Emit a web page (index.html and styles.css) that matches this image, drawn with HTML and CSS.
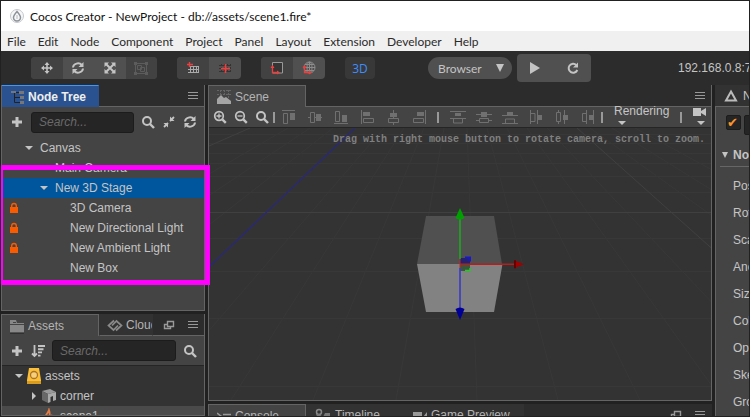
FILE: index.html
```html
<!DOCTYPE html>
<html lang="en">
<head>
<meta charset="utf-8">
<title>Cocos Creator</title>
<link rel="stylesheet" href="styles.css">
</head>
<body>
<svg class="defs" aria-hidden="true">
  <defs>
    <symbol id="search" viewBox="0 0 14 14"><circle cx="6" cy="6" r="4" fill="none" stroke="currentColor" stroke-width="2"/><path d="M9 9l4 4" stroke="currentColor" stroke-width="2.4"/></symbol>
    <symbol id="zoomin" viewBox="0 0 14 14"><circle cx="6" cy="6" r="4.3" fill="none" stroke="currentColor" stroke-width="1.7"/><path d="M9.3 9.3l3.5 3.5" stroke="currentColor" stroke-width="2.4"/><path d="M3.5 6h5M6 3.500v5" stroke="currentColor" stroke-width="1.300"/></symbol>
    <symbol id="zoomout" viewBox="0 0 14 14"><circle cx="6" cy="6" r="4.3" fill="none" stroke="currentColor" stroke-width="1.7"/><path d="M9.3 9.3l3.5 3.5" stroke="currentColor" stroke-width="2.4"/><path d="M3.5 6h5" stroke="currentColor" stroke-width="1.300"/></symbol>
    <symbol id="refresh" viewBox="0 0 14 14"><path d="M2 6.500A5 4.500 0 0 1 10.800 4M12 7.500A5 4.500 0 0 1 3.200 10" fill="none" stroke="currentColor" stroke-width="2"/><path d="M12.500 1v5h-5zM1.500 13V8h5z" fill="currentColor"/></symbol>
    <symbol id="plus" viewBox="0 0 14 14"><path d="M7 2v10M2 7h10" stroke="currentColor" stroke-width="3"/></symbol>
    <symbol id="menu" viewBox="0 0 14 14"><path d="M2 3.500h10M2 6.500h10M2 9.500h10" stroke="currentColor"/></symbol>
    <symbol id="popout" viewBox="0 0 14 14"><path d="M5.500 3.500h6v5h-6zM5 6.500H2.500v4h6V9" fill="none" stroke="currentColor" stroke-width="1.400"/></symbol>
    <symbol id="lock" viewBox="0 0 10 12"><path d="M1 5h8v6H1z" fill="currentColor"/><path d="M2.700 5.500V3.800a2.300 2.300 0 0 1 4.600 0v1.700" fill="none" stroke="currentColor" stroke-width="1.400"/></symbol>
    <symbol id="down" viewBox="0 0 8 8"><path d="M0 2h8L4 6z" fill="currentColor"/></symbol>
    <symbol id="camera" viewBox="0 0 14 10"><path d="M0 1h8v8H0zM13 1v8L8 6V4z" fill="currentColor"/></symbol>
    <symbol id="a1" viewBox="0 0 16 16"><path d="M1 1.500h13M2.500 4.500h4v10h-4z" fill="none" stroke="currentColor"/><path d="M9 4h5v7H9z" fill="currentColor"/></symbol>
    <symbol id="a2" viewBox="0 0 16 16"><path d="M1 8.500h2M7 8.500h8M3.500 3.500h4v10h-4z" fill="none" stroke="currentColor"/><path d="M9 5h5v7H9z" fill="currentColor"/></symbol>
    <symbol id="a3" viewBox="0 0 16 16"><path d="M1 14.500h14M2.500 2.500h4v10h-4z" fill="none" stroke="currentColor"/><path d="M9 6h5v7H9z" fill="currentColor"/></symbol>
    <symbol id="a4" viewBox="0 0 16 16"><path d="M2.500 1v14M4.500 9.500h10v4h-10z" fill="none" stroke="currentColor"/><path d="M4 3h7v4H4z" fill="currentColor"/></symbol>
    <symbol id="a5" viewBox="0 0 16 16"><path d="M8.500 1v8M8.500 13v3M3.500 9.500h10v4h-10z" fill="none" stroke="currentColor"/><path d="M5 4h7v4H5z" fill="currentColor"/></symbol>
    <symbol id="a6" viewBox="0 0 16 16"><path d="M14.500 1v14M2.500 9.500h10v4h-10z" fill="none" stroke="currentColor"/><path d="M6 3h7v4H6z" fill="currentColor"/></symbol>
    <symbol id="d1" viewBox="0 0 16 16"><path d="M0 2.500h16M0 9.500h16M3.500 10v4h9v-4" fill="none" stroke="currentColor"/><path d="M5 4h6v3H5z" fill="currentColor"/></symbol>
    <symbol id="d2" viewBox="0 0 16 16"><path d="M0 5.500h16M0 11.500h3M13 11.500h3M3.500 9.500h9v4h-9z" fill="none" stroke="currentColor"/><path d="M5 3h6v5H5z" fill="currentColor"/></symbol>
    <symbol id="d3" viewBox="0 0 16 16"><path d="M0 6.500h16M0 14.500h16M3.500 14v-4h9v4" fill="none" stroke="currentColor"/><path d="M5 3h6v3H5z" fill="currentColor"/></symbol>
    <symbol id="e1" viewBox="0 0 16 16"><path d="M2.500 1v14M9.500 1v14M3 4.500h4v8H3" fill="none" stroke="currentColor"/><path d="M10 6h4v5h-4z" fill="currentColor"/></symbol>
    <symbol id="e2" viewBox="0 0 16 16"><path d="M4.500 1v2M4.500 13v2M10.500 1v14M2.500 3.500h4v9h-4z" fill="none" stroke="currentColor"/><path d="M9 6h5v5H9z" fill="currentColor"/></symbol>
    <symbol id="e3" viewBox="0 0 16 16"><path d="M6.500 1v14M13.500 1v14M6 4.500H2.500v8H6" fill="none" stroke="currentColor"/><path d="M9 6h4v5H9z" fill="currentColor"/></symbol>
  </defs>
</svg>

<div class="window">
  <header class="titlebar">
    <svg class="i14" viewBox="0 0 14 14"><circle cx="7" cy="7" r="6.500" fill="#f7f7f7" stroke="#c5c8cc"/><path d="M7 2.500C4 6 3.500 7 3.500 8.500a3.500 3.500 0 0 0 7 0C10.500 7 10 6 7 2.500z" fill="none" stroke="#8d939b" stroke-width="1.500"/><path d="M7 6v4" stroke="#b5b9be"/></svg>
    <span>Cocos Creator - NewProject - db://assets/scene1.fire*</span>
  </header>
  <nav class="menubar">
    <a href="#">File</a><a href="#">Edit</a><a href="#">Node</a><a href="#">Component</a><a href="#">Project</a><a href="#">Panel</a><a href="#">Layout</a><a href="#">Extension</a><a href="#">Developer</a><a href="#">Help</a>
  </nav>

  <div class="toolbar">
    <div class="group transform">
      <button class="on" aria-label="Move"><svg class="i14" viewBox="0 0 14 14"><path d="M7 2v10M2 7h10" stroke="currentColor" stroke-width="1.600"/><path d="M7 1l2.500 3h-5zM7 13l2.500-3h-5zM1 7l3-2.500v5zM13 7l-3-2.500v5z" fill="currentColor"/></svg></button>
      <button aria-label="Rotate"><svg class="i14"><use href="#refresh"/></svg></button>
      <button aria-label="Scale"><svg class="i14" viewBox="0 0 14 14"><path d="M3 3l8 8M11 3l-8 8" stroke="currentColor" stroke-width="2"/><path d="M1.500 1.500h4.500L1.500 6zM12.500 1.500H8L12.500 6zM1.500 12.500h4.500L1.500 8zM12.500 12.500H8L12.500 8z" fill="currentColor"/></svg></button>
      <button class="off" aria-label="Rect"><svg class="i14" viewBox="0 0 14 14"><path d="M1.500 2.500h11v10h-11zM3.500 4.500h4v4h-4zM6.500 6.500h4v4h-4z" fill="none" stroke="currentColor"/><path d="M0 1h3v3H0zM11 1h3v3h-3zM0 11h3v3H0zM11 11h3v3h-3z" fill="currentColor"/></svg></button>
    </div>
    <div class="group">
      <button class="on" aria-label="Anchor"><svg class="i14" viewBox="0 0 14 14"><path d="M3 5.500h10M2 8.500h11M2 11.500h11M4.500 5v7M7.500 5v7M10.500 5v7M12.500 5v7" stroke="#aaa"/><path d="M1 3.500h6M3.500 1v5" stroke="#f03e3e" stroke-width="1.400"/></svg></button>
      <button aria-label="Center"><svg class="i14" viewBox="0 0 14 14"><path d="M1 4.500h12M1 7.500h12M1 10.500h12M3.500 3v9M6.500 3v9M9.500 3v9M12.500 3v9" stroke="#333" stroke-dasharray="2 1"/><path d="M3 7.500h9M7.500 3v9" stroke="#f03e3e" stroke-width="1.600"/></svg></button>
    </div>
    <div class="group">
      <button class="on" aria-label="Local"><svg class="i14" viewBox="0 0 14 14"><path d="M2.500 1.500h10V12h-10z" fill="#353535" stroke="#999"/><path d="M2.500 5v6.500H8" fill="none" stroke="#f03e3e" stroke-width="1.300"/><path d="M.500 7l2-3 2 3zM7 9.500l3 2-3 2z" fill="#f03e3e"/></svg></button>
      <button aria-label="Global"><svg class="i14" viewBox="0 0 14 14"><g fill="none" stroke="#8d8d8d"><circle cx="7.500" cy="6.500" r="5.500"/><ellipse cx="7.500" cy="6.500" rx="2.500" ry="5.500"/><path d="M2 6.500h11M7.500 1v11M3 3.500h9M3 9.500h9"/></g><path d="M2.500 5v6.500H8" fill="none" stroke="#f03e3e" stroke-width="1.300"/><path d="M.500 7l2-3 2 3zM7 9.500l3 2-3 2z" fill="#f03e3e"/></svg></button>
    </div>
    <button class="three">3D</button>
    <button class="browser">Browser<svg class="i8" viewBox="0 0 8 8"><path d="M0 0h8L4 8z" fill="currentColor"/></svg></button>
    <div class="play">
      <button aria-label="Play"><svg class="i14" viewBox="0 0 14 14"><path d="M2 1l10 6-10 6z" fill="currentColor"/></svg></button>
      <button aria-label="Reload"><svg class="i14" viewBox="0 0 14 14"><path d="M11.300 9A4.500 4.500 0 1 1 10.300 4" fill="none" stroke="currentColor" stroke-width="2"/><path d="M12 1.500v5H7z" fill="currentColor"/></svg></button>
    </div>
    <span class="address">192.168.0.8:7456</span>
  </div>

  <main class="dock">
    <div class="left">
      <section class="panel tree-panel">
        <div class="tabs">
          <div class="tab focused"><svg class="i14" viewBox="0 0 14 14"><path d="M3.500 2v10.500H10M3.500 2.500H8M3.500 7.500H10" fill="none" stroke="#222"/><path d="M0 1h5v2H0zM8 1h5v3H8zM9 6h4v3H9zM9 11h4v3H9z" fill="#777"/></svg><b>Node Tree</b></div>
          <div class="fill"></div>
          <button class="ic" aria-label="Menu"><svg class="i14"><use href="#menu"/></svg></button>
        </div>
        <div class="bar">
          <button class="ic" aria-label="Add"><svg class="i14"><use href="#plus"/></svg></button>
          <input type="text" placeholder="Search..." aria-label="Search nodes">
          <button class="ic" aria-label="Search"><svg class="i14"><use href="#search"/></svg></button>
          <button class="ic" aria-label="Collapse"><svg class="i14" viewBox="0 0 14 14"><path d="M8 1.500V6h4.500zM1.500 8H6v4.500z" fill="currentColor"/><path d="M8 6l4-4M6 8l-4 4" stroke="currentColor" stroke-width="1.800"/></svg></button>
          <button class="ic" aria-label="Refresh"><svg class="i14"><use href="#refresh"/></svg></button>
        </div>
        <ul class="tree">
          <li><span class="lock"></span><svg class="i8"><use href="#down"/></svg>Canvas</li>
          <li class="d2"><span class="lock"></span><span class="i8"></span>Main Camera</li>
          <li class="d2 selected"><span class="lock"></span><svg class="i8"><use href="#down"/></svg>New 3D Stage</li>
          <li class="d3"><svg class="lock"><use href="#lock"/></svg><span class="i8"></span>3D Camera</li>
          <li class="d3"><svg class="lock"><use href="#lock"/></svg><span class="i8"></span>New Directional Light</li>
          <li class="d3"><svg class="lock"><use href="#lock"/></svg><span class="i8"></span>New Ambient Light</li>
          <li class="d3"><span class="lock"></span><span class="i8"></span>New Box</li>
        </ul>
      </section>
      <section class="panel assets-panel">
        <div class="tabs">
          <div class="tab"><svg class="i16" viewBox="0 0 16 16"><path d="M1 2h6l1 3h7v10H1z" fill="#888"/><path d="M1 6.500h14" stroke="#444"/><path d="M4 4.500h3" stroke="#444"/><path d="M1 15h14" stroke="#1c1c1c"/></svg><span>Assets</span></div>
          <div class="tab idle cloud"><svg class="i16" viewBox="0 0 16 16"><path d="M7 3.500L1.500 8.500l5 4.500 4.500-4.500M9 13.500l5.500-5L9.500 4 5 8.500" fill="none" stroke="#8a8a8a" stroke-width="1.700"/></svg><span>Cloud</span></div>
          <div class="fill"></div>
          <button class="ic" aria-label="Pop out"><svg class="i14"><use href="#popout"/></svg></button>
          <button class="ic" aria-label="Menu"><svg class="i14"><use href="#menu"/></svg></button>
        </div>
        <div class="bar lined">
          <button class="ic" aria-label="Add"><svg class="i14"><use href="#plus"/></svg></button>
          <button class="ic" aria-label="Sort"><svg class="i14" viewBox="0 0 14 14"><path d="M3.500 1v11M1 9.500L3.500 12 6 9.500" fill="none" stroke="currentColor" stroke-width="1.800"/><path d="M7 2h7M7 5.200h5.500M7 8.400h4M7 11.600h2.500" stroke="currentColor" stroke-width="1.900"/></svg></button>
          <input type="text" placeholder="Search..." aria-label="Search assets">
          <button class="ic" aria-label="Search"><svg class="i14"><use href="#search"/></svg></button>
        </div>
        <ul class="assets">
          <li><svg class="i8"><use href="#down"/></svg><svg class="i16" viewBox="0 0 16 16"><path d="M3 0h10l2 12v4H1v-4z" fill="#fbbf3a"/><path d="M1 13h14v3H1z" fill="#d99c22"/><circle cx="8" cy="7" r="3.500" fill="#f7cf7b" stroke="#a9742a" stroke-width="1.300"/></svg>assets</li>
          <li class="d1"><svg class="i8" viewBox="0 0 8 8"><path d="M2 0l4 4-4 4z" fill="currentColor"/></svg><svg class="i16" viewBox="0 0 16 16"><path d="M1 3l8-2 6 3-8 2z" fill="#999"/><path d="M1 3l6 3v9l-6-3z" fill="#686868"/><path d="M7 6l8-2v8l-3 1V8L9.500 9v5L7 15z" fill="#aaa"/></svg>corner</li>
          <li class="d1 hover"><span class="i8"></span><svg class="i16" viewBox="0 0 16 16"><path d="M8 2C7 6 3 8 3 12c0 3 10 3 10 0 0-3-2-3-2-5-1 2-2 3-3 3 1-3 1-5 0-8z" fill="none" stroke="#e07b45" stroke-width="1.800"/></svg>scene1</li>
        </ul>
      </section>
    </div>

    <div class="center">
      <section class="panel scene-panel">
        <div class="tabs">
          <div class="tab scene"><svg class="i14" viewBox="0 0 14 14"><path d="M0 .5h14M0 4.500h14M3.500 0v8M7.500 0v6M11.500 0v8" stroke="#666" stroke-dasharray="2 1"/><path d="M0 14V9l4-4 3 3 2-1 5 4v3z" fill="#a5a5a5"/></svg><span>Scene</span></div>
          <div class="fill"></div>
          <button class="ic" aria-label="Menu"><svg class="i14"><use href="#menu"/></svg></button>
        </div>
        <div class="scene-bar">
          <div class="zooms">
            <button class="ic" aria-label="Zoom in"><svg class="i14"><use href="#zoomin"/></svg></button>
            <button class="ic" aria-label="Zoom out"><svg class="i14"><use href="#zoomout"/></svg></button>
            <button class="ic" aria-label="Zoom reset"><svg class="i14"><use href="#search"/></svg></button>
          </div>
          <i class="sep"></i>
          <div class="aligns">
            <svg class="i16"><use href="#a1"/></svg><svg class="i16"><use href="#a2"/></svg><svg class="i16"><use href="#a3"/></svg><svg class="i16"><use href="#a4"/></svg><svg class="i16"><use href="#a5"/></svg><svg class="i16"><use href="#a6"/></svg>
          </div>
          <i class="sep"></i>
          <div class="aligns spread">
            <svg class="i16"><use href="#d1"/></svg><svg class="i16"><use href="#d2"/></svg><svg class="i16"><use href="#d3"/></svg><svg class="i16"><use href="#e1"/></svg><svg class="i16"><use href="#e2"/></svg><svg class="i16"><use href="#e3"/></svg>
          </div>
          <i class="sep"></i>
          <button class="stack">Rendering<svg class="i8"><use href="#down"/></svg></button>
          <i class="sep"></i>
          <button class="stack cam" aria-label="Camera"><svg class="i14"><use href="#camera"/></svg><svg class="i8"><use href="#down"/></svg></button>
        </div>
        <div class="view">
          <svg class="stage" viewBox="209 128 502 272" preserveAspectRatio="xMidYMid slice">
            <g stroke="#383838" fill="none">
              <path d="M209 134.500h502M209 143.500h502M209 153.500h502M209 163.500h502M209 176.500h502M209 192.500h502M209 238.500h502M209 271.500h502M209 318.500h502M209 386.500h502"/>
              <path d="M467 128l10 272M444 128l-48 272M424 128L313 400M404 128L231 400M384 128L149 400M333 128L-15 400M310 128L-97 400M288 128L-179 400M487 128l71 272M507 128l133 272M527 128l195 272M547 128l257 272M590 128l378 272M612 128l438 272M635 128l500 272"/>
              <path d="M209 212.500h502M577 128l141 126M250 128l-41 18" stroke="#404040"/>
            </g>
            <path d="M355 128L209 267" stroke="#29297a" stroke-width="1.300"/>
            <path d="M426 216h68l8 48h-85z" fill="#505050"/>
            <path d="M417 264h85.500L494 312h-68z" fill="#828282"/>
            <path d="M460 258h10v6h-10z" fill="#22226e"/><path d="M465 257.500h5v4" fill="none" stroke="#1818d0" stroke-width="2"/>
            <path d="M460 265h10v6h-10z" fill="#3c563c"/><path d="M465 270.500h5V268" fill="none" stroke="#1fd01f" stroke-width="1.400"/>
            <path d="M460 215v44" stroke="#20a820" stroke-width="1.600"/>
            <path d="M460 268v41" stroke="#3a3ac8" stroke-width="1.600"/>
            <path d="M460 264.300h55" stroke="#b81c1c" stroke-width="1.600"/><path d="M460 259v9" stroke="#d02020"/>
            <path d="M460 208l4.500 10q-4.500 3-9 0z" fill="#00a000"/>
            <path d="M460 320l-4.500-11q4.500-3 9 0z" fill="#000098"/>
            <path d="M524 264.300l-10-4v8z" fill="#a00000"/><path d="M514 260.300h2v8h-2z" fill="#600"/>
          </svg>
          <p class="hint">Drag with right mouse button to rotate camera, scroll to zoom.</p>
        </div>
      </section>
      <section class="console">
        <div class="tabs">
          <div class="tab"><svg class="i14" viewBox="0 0 14 14"><path d="M0 4l5 4-5 4M6 5.500h8M7 8.500h7M6 11.500h8" fill="none" stroke="#999" stroke-width="1.600"/></svg><span>Console</span></div>
          <div class="tab idle"><svg class="i16" viewBox="0 0 16 16"><circle cx="4" cy="5" r="2.500" fill="none" stroke="#888" stroke-width="1.500"/><path d="M1 7h3l4 3 2-4h5v6H3z" fill="#777"/></svg><span>Timeline</span></div>
          <div class="tab idle preview"><svg class="i14" viewBox="0 0 14 12"><path d="M0 3h9v8H0zM14 3v8L10 8z" fill="#999"/></svg><span>Game Preview</span></div>
          <div class="fill"></div>
          <button class="ic" aria-label="Pop out"><svg class="i14"><use href="#popout"/></svg></button>
          <button class="ic" aria-label="Menu"><svg class="i14"><use href="#menu"/></svg></button>
        </div>
      </section>
    </div>

    <section class="inspector">
      <div class="insp-tab"><svg class="i14" viewBox="0 0 14 14"><path d="M7 2.500L12 11.500H2z" fill="none" stroke="#bbb" stroke-width="2"/></svg><span>Node</span></div>
      <div class="insp-body">
        <div class="active"><input type="checkbox" checked aria-label="Active"><input type="text" aria-label="Node name"></div>
        <h2><svg class="i8" viewBox="0 0 8 8"><path d="M1 1h6L4 7z" fill="currentColor"/></svg>Node</h2>
        <ul class="props"><li>Position</li><li>Rotation</li><li>Scale</li><li>Anchor</li><li>Size</li><li>Color</li><li>Opacity</li><li>Skew</li><li>Group</li></ul>
      </div>
    </section>
  </main>
  <div class="highlight"></div>
</div>
</body>
</html>
```
FILE: styles.css
```css
* { box-sizing: border-box; }
body { margin: 0; background: #212121; color: #c4c4c4; font: 12px/20px "Liberation Sans", Arial, sans-serif; }
ul, p, h2 { margin: 0; padding: 0; list-style: none; }
button { margin: 0; padding: 0; border: 0; background: none; color: inherit; font: inherit; display: flex; align-items: center; justify-content: center; }
svg { display: block; flex: none; }
.defs { position: absolute; width: 0; height: 0; }
.i8 { width: 8px; height: 8px; flex: none; }
.i14 { width: 14px; height: 14px; }
.i16 { width: 16px; height: 16px; }
.window { position: relative; display: flex; flex-direction: column; height: 100vh; padding: 1px; overflow: hidden; white-space: nowrap; }

.titlebar { flex: none; display: flex; align-items: center; gap: 6px; height: 30px; padding-left: 9px; background: #fff; color: #111; font: 12px Lato, "Open Sans", sans-serif; }
.menubar { flex: none; display: flex; align-items: center; gap: 12px; height: 20px; padding-left: 6px; background: #f0f0f0; font: 12px Lato, "Open Sans", sans-serif; }
.menubar a { color: #2b2b2b; text-decoration: none; }

.toolbar { flex: none; display: flex; align-items: center; height: 34px; padding-left: 30px; background: #2c2c2c; }
.group { display: flex; height: 22px; margin-right: 20px; border-radius: 4px; background: #505050; overflow: hidden; }
.group button { width: 32px; }
.group.transform { width: 126px; }
.group.transform button { flex: 1; }
.group .on { background: #424242; }
.group .off { background: #424242; color: #5c5c5c; }
.three { width: 30px; height: 22px; border-radius: 4px; background: #383838; color: #3d8fff; font: 12px "Open Sans", sans-serif; }
.browser { justify-content: space-between; width: 84px; height: 22px; margin-left: 53px; padding: 0 8px 0 10px; border-radius: 11px; background: #505050; font: 12px Lato, "Open Sans", sans-serif; }
.play { display: flex; gap: 24px; height: 28px; margin-left: 5px; padding: 0 11px; border-radius: 4px; background: #505050; }
.address { flex: 1; min-width: 0; margin-left: 87px; overflow: hidden; }

.dock { flex: 1; min-height: 0; display: grid; grid-template-columns: 204px minmax(0, 1fr) 34px; gap: 3px; }
.left { display: grid; grid-template-rows: 226px minmax(0, 1fr); gap: 3px; min-height: 0; }
.center { display: grid; grid-template-rows: minmax(0, 1fr) 12px; gap: 3px; min-height: 0; }
.panel { display: flex; flex-direction: column; min-height: 0; overflow: hidden; background: #444; border: solid #646464; border-width: 0 1px 1px; }
.tabs { flex: none; display: flex; height: 22px; margin: 0 -1px; background: #2c2c2c; }
.tab { display: flex; align-items: center; gap: 4px; width: 98px; padding-left: 8px; border: solid #646464; border-width: 1px 1px 0; background: #444; color: #b4b4b4; }
.tab.focused { gap: 3px; padding-left: 9px; background: #2a5290; border-color: #2a5290; border-top-color: #3b98ff; color: #eee; }
.tab.idle { background: #323232; border-color: transparent; border-bottom: 1px solid #646464; }
.tabs .fill { flex: 1; border-bottom: 1px solid #646464; }
.tabs .ic { width: 24px; border-bottom: 1px solid #646464; color: #999; }
.bar { flex: none; display: flex; align-items: center; gap: 7px; height: 30px; padding: 0 7px 0 8px; }
.bar input { flex: 1; min-width: 0; height: 21px; padding: 0 7px; border: 1px solid #1c1c1c; border-radius: 3px; background: #252525; color: #ccc; font: italic 12px "Liberation Sans", Arial, sans-serif; }
.bar input::placeholder { color: #6a6a6a; }

.tree { padding: 1px 0; }
.tree li { display: flex; align-items: center; gap: 7px; height: 20px; padding-left: 7px; }
.tree .i8 { margin-left: -1px; }
.tree .lock { flex: none; width: 10px; height: 12px; color: #fa5a00; }
.tree .d2 .lock { margin-right: 15px; }
.tree .d3 .lock { margin-right: 30px; }
.tree .selected { background: #00569c; }

.assets-panel .tab { gap: 3px; padding-left: 7px; }
.assets-panel .tab.cloud { width: 54px; overflow: hidden; }
.bar.lined { border-bottom: 1px solid #252525; }
.assets { flex: 1; background: #333; }
.assets li { display: flex; align-items: center; gap: 3px; height: 20px; padding-left: 13px; }
.assets .d1 { padding-left: 28px; }
.assets .hover { background: #4a4a4a; }

.scene-bar { flex: none; display: flex; align-items: center; height: 21px; padding-left: 4px; border-bottom: 1px solid #252525; }
.zooms { display: flex; gap: 7px; margin-right: 4px; }
.sep { flex: none; width: 2px; height: 11px; background: #999; }
.aligns { display: flex; gap: 10px; margin: 0 10px 0 6px; color: #707070; }
.aligns.spread { margin: 0 5px 0 11px; }
.stack { flex-direction: column; align-items: flex-start; justify-content: space-between; height: 20px; margin: 0 11px; line-height: 8px; }
.stack .i8 { margin-left: 4px; }
.stack.cam .i14 { height: 10px; }
.view { position: relative; flex: 1; min-height: 0; background: #333; }
.stage { width: 100%; height: 100%; }
.hint { position: absolute; top: 4px; right: 6px; color: #808080; font: bold 10px/16px "Liberation Mono", monospace; }
.console { overflow: hidden; }
.console .tabs { margin: 0; }
.console .preview { width: 120px; }

.inspector { min-width: 0; overflow: hidden; }
.insp-tab { display: flex; align-items: center; gap: 5px; height: 21px; padding-left: 9px; background: #323232; }
.insp-body { height: 100%; padding-left: 4px; border: solid #646464; border-width: 1px 0 0 1px; background: #444; }
.active { display: flex; gap: 3px; padding: 8px 0 0 6px; }
.active input { appearance: none; flex: none; width: 15px; height: 15px; margin: 0; border: 1px solid #1c1c1c; border-radius: 2px; background: #252525; }
.active input[type="checkbox"]::after { content: "✔"; display: block; color: #fd942b; font: 13px/13px "DejaVu Sans", sans-serif; }
.active input[type="text"] { width: 100px; height: 20px; }
h2 { display: flex; align-items: center; gap: 4px; height: 24px; margin-top: 8px; padding-left: 1px; border-bottom: 1px solid #666; font-size: 12px; }
.props { padding: 6px 0 0 13px; }
.props li { height: 27px; line-height: 27px; }
.highlight { position: absolute; left: 1px; top: 165px; width: 209px; height: 120px; border: 5px solid #f0f; border-left-width: 2px; }
```
